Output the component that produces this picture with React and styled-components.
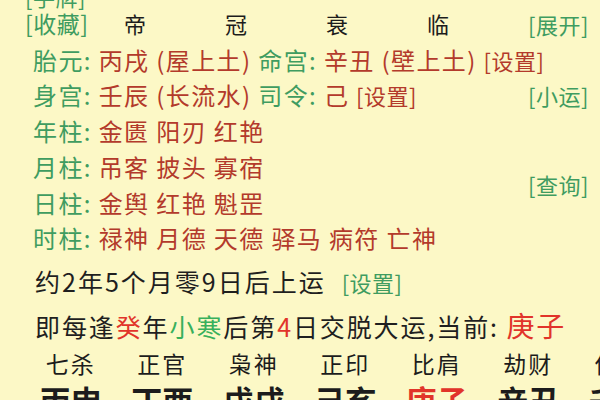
import React from "react";
import styled, { createGlobalStyle } from "styled-components";

const GlobalStyle = createGlobalStyle`
  html, body {
    margin: 0;
    padding: 0;
    background: #fcf8c6;
  }
  body {
    width: 600px;
    height: 400px;
    overflow: hidden;
    font-family: "Noto Sans CJK SC", "Noto Sans", sans-serif;
  }
`;

const Page = styled.div`
  width: 600px;
  height: 400px;
  overflow: hidden;
  box-sizing: border-box;
  padding: 0 0 0 25px;
  color: #1f1f1f;
`;

const TopGrid = styled.div`
  margin-top: -14px;
  display: grid;
  grid-template-columns: minmax(0, 1fr) 72px;
  grid-template-rows: 20px repeat(7, 35.7px);
  align-items: center;
`;

const Cell = styled.div`
  grid-row: ${(p) => (p.$span ? `${p.$row} / span ${p.$span}` : p.$row)};
  grid-column: ${(p) => (p.$full ? "1 / -1" : p.$col || 1)};
  white-space: nowrap;
  font-size: 24px;
  letter-spacing: 1.4px;
  line-height: ${(p) => p.$lh || 35}px;
`;

const Link = styled.span`
  color: ${(p) => p.$color || "#3f9c60"};
  font-size: ${(p) => p.$size || 22}px;
  letter-spacing: 0.5px;
  margin-left: ${(p) => p.$gap || 0}px;
`;

const HeaderRow = styled.div`
  display: flex;
  align-items: center;
`;

const HeaderTag = styled.div`
  width: 103px;
  color: #3f9c60;
  font-size: 23px;
  letter-spacing: 0.5px;
`;

const HeaderCell = styled.div`
  width: 105px;
  font-size: 22px;
  color: #1c1c1c;
`;

const InfoLine = styled.div`
  padding-left: 8px;
`;

const Label = styled.span`
  color: #3f9c60;
`;

const Value = styled.span`
  color: #b33a2b;
`;

const RunLine = styled.div`
  margin-top: 7px;
  padding-left: 10px;
  font-size: 25px;
  letter-spacing: 2px;
  line-height: 36px;
  white-space: nowrap;
`;

const DaYunLine = styled.div`
  margin-top: 5px;
  padding-left: 10px;
  font-size: 25px;
  letter-spacing: 1.9px;
  line-height: 40px;
  white-space: nowrap;
`;

const Mark = styled.span`
  color: ${(p) => p.$color};
  font-size: ${(p) => p.$size || 25}px;
`;

const ColumnRow = styled.div`
  display: grid;
  grid-template-columns: repeat(7, 91.5px);
  font-size: ${(p) => p.$size}px;
  letter-spacing: ${(p) => p.$ls || 0}px;
  font-weight: ${(p) => (p.$bold ? 700 : 400)};
  line-height: ${(p) => p.$lh}px;
  color: #1c1c1c;
  white-space: nowrap;
`;

const Col = styled.div`
  text-align: center;
  color: ${(p) => (p.$hot ? "#e1342a" : "inherit")};
`;

const header = ["帝", "冠", "衰", "临"];
const shiShen = ["七杀", "正官", "枭神", "正印", "比肩", "劫财", "伤官"];
const ganZhi = ["丙申", "丁酉", "戊戌", "己亥", "庚子", "辛丑", "壬寅"];

const pillars = [
  { row: 5, label: "年柱:", value: "金匮 阳刃 红艳", full: true },
  { row: 6, label: "月柱:", value: "吊客 披头 寡宿" },
  { row: 7, label: "日柱:", value: "金舆 红艳 魁罡" },
  { row: 8, label: "时柱:", value: "禄神 月德 天德 驿马 病符 亡神", full: true },
];

export default function App() {
  return (
    <Page>
      <GlobalStyle />
      <TopGrid>
        <Cell $row={1} $lh={20}>
          <Link>[手牌]</Link>
        </Cell>
        <Cell $row={2}>
          <HeaderRow>
            <HeaderTag>[收藏]</HeaderTag>
            {header.map((h) => (
              <HeaderCell key={h}>{h}</HeaderCell>
            ))}
          </HeaderRow>
        </Cell>
        <Cell $row={2} $col={2}>
          <Link>[展开]</Link>
        </Cell>
        <Cell $row={3} $full>
          <InfoLine>
            <Label>胎元: </Label>
            <Value>丙戌 (屋上土) </Value>
            <Label>命宫: </Label>
            <Value>辛丑 (壁上土) </Value>
            <Link $color="#b33a2b">[设置]</Link>
          </InfoLine>
        </Cell>
        <Cell $row={4}>
          <InfoLine>
            <Label>身宫: </Label>
            <Value>壬辰 (长流水) </Value>
            <Label>司令: </Label>
            <Value>己 </Value>
            <Link $color="#b33a2b">[设置]</Link>
          </InfoLine>
        </Cell>
        <Cell $row={4} $col={2}>
          <Link>[小运]</Link>
        </Cell>
        {pillars.map((p) => (
          <Cell key={p.label} $row={p.row} $full={p.full}>
            <InfoLine>
              <Label>{p.label} </Label>
              <Value>{p.value}</Value>
            </InfoLine>
          </Cell>
        ))}
        <Cell $row={6} $col={2} $span={2}>
          <Link>[查询]</Link>
        </Cell>
      </TopGrid>

      <RunLine>
        约2年5个月零9日后上运
        <Link $gap={16}>[设置]</Link>
      </RunLine>

      <DaYunLine>
        即每逢<Mark $color="#e1342a">癸</Mark>年<Mark $color="#38b05c">小寒</Mark>
        后第<Mark $color="#e1342a">4</Mark>日交脱大运,当前:{" "}
        <Mark $color="#e1342a" $size={28}>
          庚子
        </Mark>
      </DaYunLine>

      <ColumnRow $size={23} $ls={2} $lh={34}>
        {shiShen.map((s, i) => (
          <Col key={i}>{s}</Col>
        ))}
      </ColumnRow>
      <ColumnRow $size={31} $lh={40} $bold>
        {ganZhi.map((g, i) => (
          <Col key={i} $hot={g === "庚子"}>
            {g}
          </Col>
        ))}
      </ColumnRow>
    </Page>
  );
}
